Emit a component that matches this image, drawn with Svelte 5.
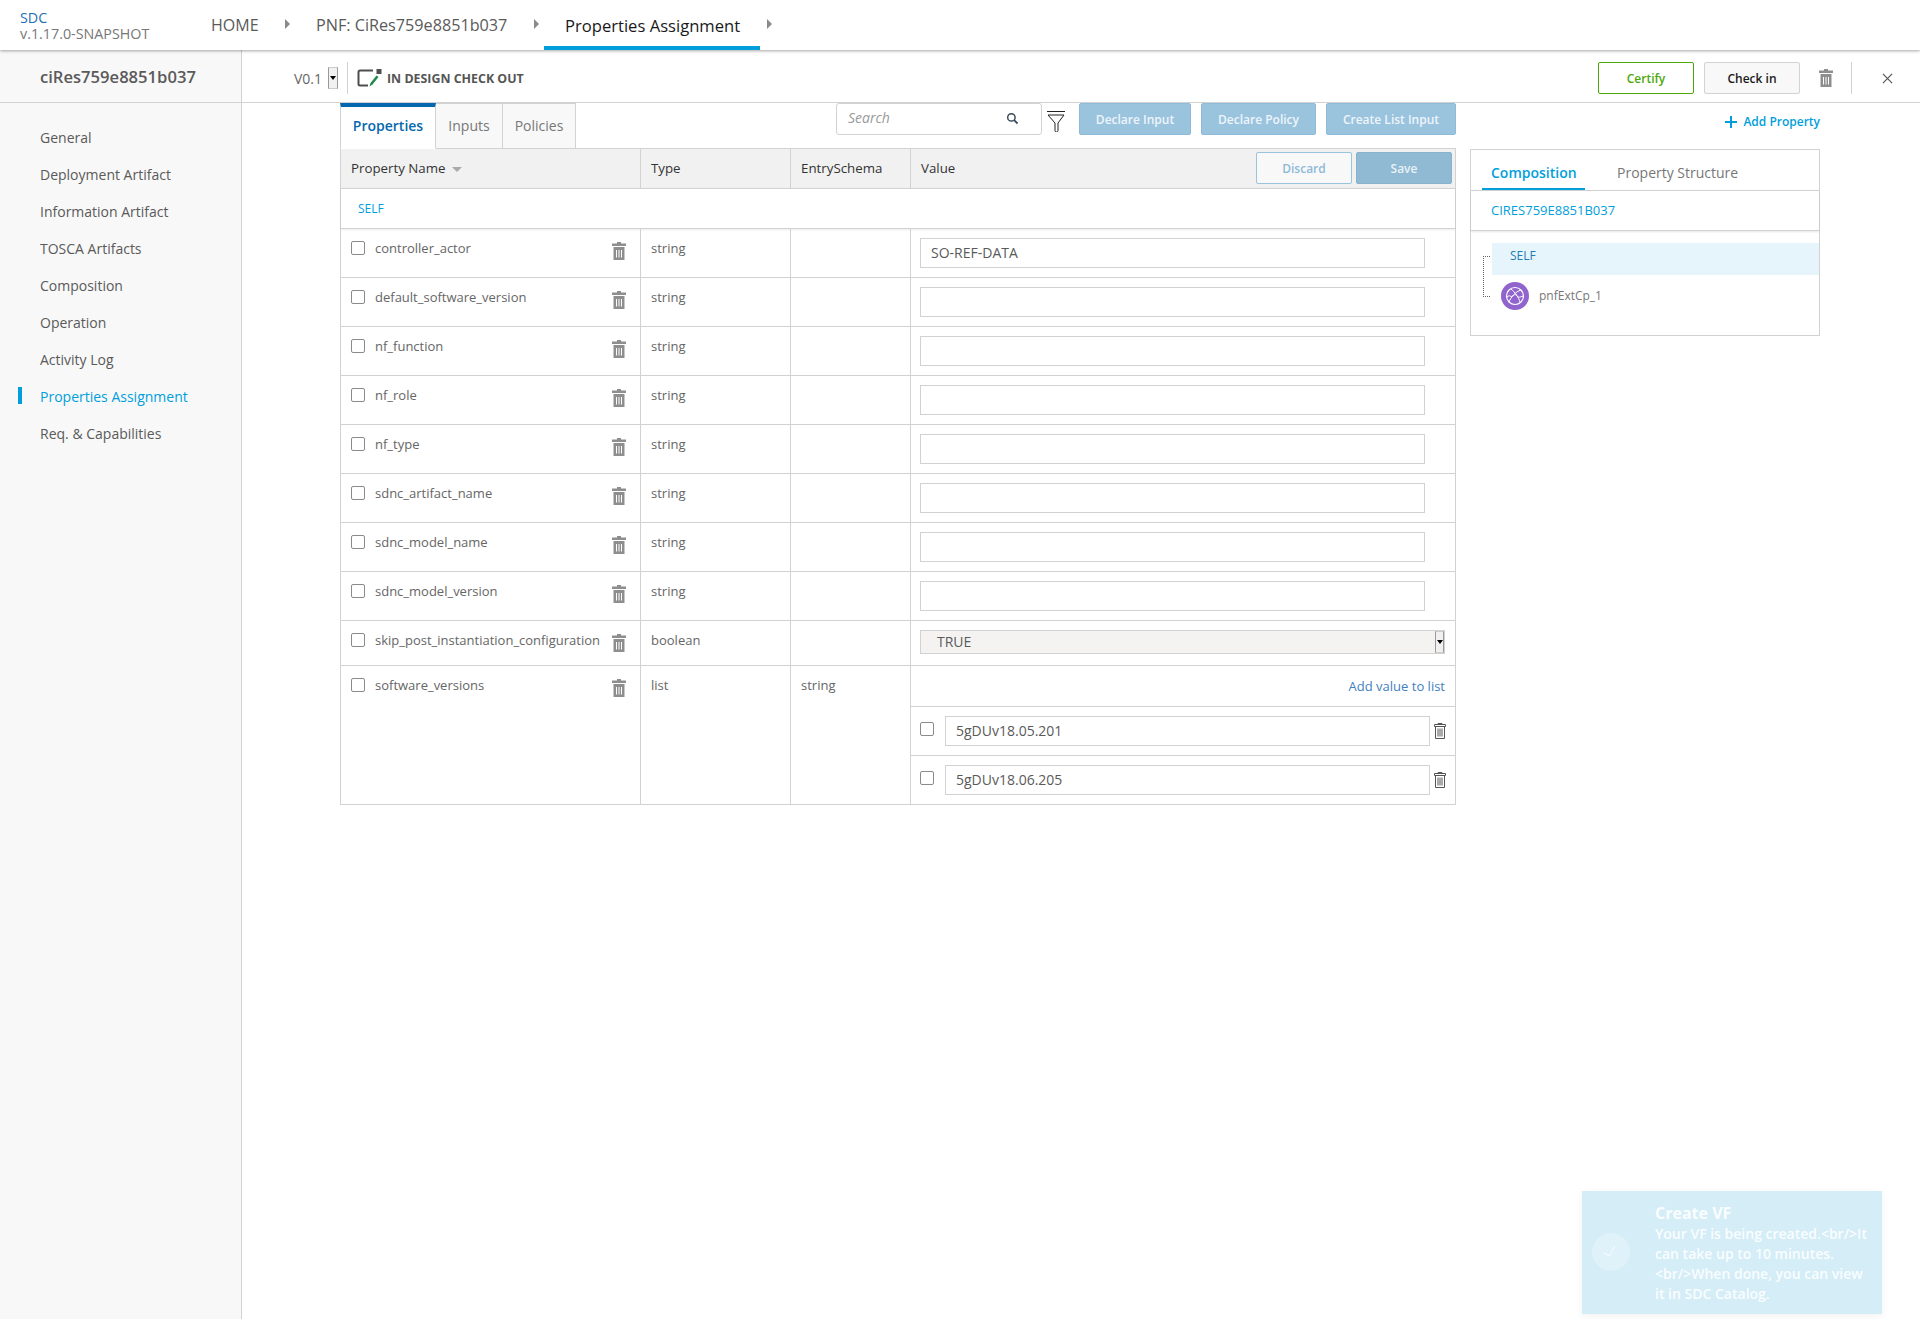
<script>
  const nav = ['General','Deployment Artifact','Information Artifact','TOSCA Artifacts','Composition','Operation','Activity Log','Properties Assignment','Req. & Capabilities'];
  const rows = [
    ['controller_actor','SO-REF-DATA'],['default_software_version',''],['nf_function',''],['nf_role',''],
    ['nf_type',''],['sdnc_artifact_name',''],['sdnc_model_name',''],['sdnc_model_version','']
  ];
</script>

{#snippet trash(cls)}
  <svg class={cls} viewBox="0 0 14 18" aria-hidden="true">
    <path d="M5 0h4v1.500h5V4H0V1.500h5z" fill="currentColor"/>
    <path d="M1.500 5h11v13h-11z" fill="currentColor"/>
    <path d="M4 8h1v7.500H4zM6.500 8h1v7.500h-1zM9 8h1v7.500H9z" fill="#fff"/>
  </svg>
{/snippet}

{#snippet trashLine()}
  <svg class="trash-line" viewBox="0 0 12 16" aria-hidden="true">
    <path d="M4 1.500V.5h4v1M.5 1.500h11v2H.5zM1.500 3.500h9v12h-9z" fill="none" stroke="#555" stroke-width="1"/>
    <path d="M4 5.500v8M6 5.500v8M8 5.500v8" stroke="#555" stroke-width="1"/>
  </svg>
{/snippet}

<div class="page">
  <header class="top">
    <div class="brand"><div class="sdc">SDC</div><div class="ver">v.1.17.0-SNAPSHOT</div></div>
    <nav class="crumbs">
      <span class="crumb home">HOME</span><i class="arrow a1"></i>
      <span class="crumb pnf">PNF: CiRes759e8851b037</span><i class="arrow a2"></i>
      <span class="crumb cur">Properties Assignment</span><i class="arrow a3"></i>
    </nav>
  </header>

  <div class="body">
    <aside class="side">
      <div class="name">ciRes759e8851b037</div>
      <ul class="menu">
        {#each nav as n}
          <li class:active={n === 'Properties Assignment'}>{n}</li>
        {/each}
      </ul>
    </aside>

    <main class="main">
      <div class="bar">
        <span class="version">V0.1</span>
        <span class="spin small"><b></b></span>
        <span class="vsep"></span>
        <svg class="state" viewBox="0 0 26 20" aria-hidden="true">
          <path d="M16 2.500H3A1.500 1.500 0 0 0 1.500 4v12A1.500 1.500 0 0 0 3 17.500h8" fill="none" stroke="#4f4f4f" stroke-width="2"/>
          <path d="M12.500 18.500l1-3.500 6-7.500 2 1.500-6 7.500z" fill="#1f8a4c"/>
          <rect x="19.500" y="1" width="5" height="5" fill="#4f4f4f"/>
        </svg>
        <span class="state-text">IN DESIGN CHECK OUT</span>
        <div class="bar-right">
          <button class="certify">Certify</button>
          <button class="checkin">Check in</button>
          {@render trash('trash big')}
          <span class="vsep2"></span>
          <svg class="close" viewBox="0 0 12 12" aria-hidden="true"><path d="M1 1l10 10M11 1L1 11" stroke="#555" stroke-width="1.300"/></svg>
        </div>
      </div>

      <div class="work">
        <section class="left">
          <div class="toolbar">
            <div class="tabs">
              <span class="tab on">Properties</span><span class="tab t2">Inputs</span><span class="tab t3">Policies</span>
            </div>
            <div class="search">
              <span>Search</span>
              <svg viewBox="0 0 14 14" aria-hidden="true"><circle cx="5.800" cy="5.800" r="4" fill="none" stroke="#3a4a5a" stroke-width="1.600"/><path d="M8.800 8.800l3.600 3.600" stroke="#3a4a5a" stroke-width="2"/></svg>
            </div>
            <svg class="funnel" viewBox="0 0 18 21" aria-hidden="true"><path d="M0 .5h18M1 4h16l-6 8v7.500a1.500 1.500 0 0 1-3 0V12z" fill="#fff" stroke="#222" stroke-width="1"/></svg>
            <button class="blue b1">Declare Input</button>
            <button class="blue b2">Declare Policy</button>
            <button class="blue b3">Create List Input</button>
          </div>

          <div class="table">
            <div class="row head">
              <div class="cell">Property Name <i class="sort"></i></div>
              <div class="cell">Type</div>
              <div class="cell">EntrySchema</div>
              <div class="cell val">Value
                <span class="acts"><button class="discard">Discard</button><button class="save">Save</button></span>
              </div>
            </div>
            <div class="selfrow">SELF</div>

            {#each rows as r}
              <div class="row prop">
                <div class="cell pn"><span class="cb"></span><span class="pname">{r[0]}</span>{@render trash('trash')}</div>
                <div class="cell">string</div>
                <div class="cell"></div>
                <div class="cell fieldcell"><input class="field" value={r[1]} aria-label={r[0]} /></div>
              </div>
            {/each}

            <div class="row prop skip">
              <div class="cell pn"><span class="cb"></span><span class="pname">skip_post_instantiation_configuration</span>{@render trash('trash')}</div>
              <div class="cell">boolean</div>
              <div class="cell"></div>
              <div class="cell fieldcell"><div class="select">TRUE<span class="spin"><b></b></span></div></div>
            </div>

            <div class="row prop list">
              <div class="cell pn"><span class="cb"></span><span class="pname">software_versions</span>{@render trash('trash')}</div>
              <div class="cell">list</div>
              <div class="cell">string</div>
              <div class="cell listcell">
                <div class="addv">Add value to list</div>
                <div class="sub"><span class="cb"></span><input class="field" value="5gDUv18.05.201" aria-label="value 1" />{@render trashLine()}</div>
                <div class="sub"><span class="cb"></span><input class="field" value="5gDUv18.06.205" aria-label="value 2" />{@render trashLine()}</div>
              </div>
            </div>
          </div>
        </section>

        <section class="right">
          <div class="addp"><span class="plus"></span>Add Property</div>
          <div class="panel">
            <div class="ptabs"><span class="ptab on">Composition</span><span class="ptab">Property Structure</span></div>
            <div class="pname2">CIRES759E8851B037</div>
            <div class="tree">
              <span class="dots"></span>
              <div class="tself">SELF</div>
              <div class="tnode">
                <svg viewBox="0 0 28 28" aria-hidden="true">
                  <circle cx="14" cy="14" r="14" fill="#9063cd"/>
                  <circle cx="14" cy="14" r="8.500" fill="none" stroke="#fff" stroke-width="1.200"/>
                  <path d="M6 15c3-3 4 1 6-1s2-2 4 0 3 1 6 0M10 7c4 3 8 9 9 13M8 20c2-5 6-10 12-12" fill="none" stroke="#fff" stroke-width="1"/>
                </svg>
                <span>pnfExtCp_1</span>
              </div>
            </div>
          </div>
        </section>
      </div>
    </main>
  </div>

  <div class="toast">
    <div class="tick"><svg viewBox="0 0 20 20" aria-hidden="true"><path d="M1 11l7 4 7-13" fill="none" stroke="#fff" stroke-width="1"/></svg></div>
    <div class="tbody">
      <div class="ttl">Create VF</div>
      <div class="msg">Your VF is being created.&lt;br/&gt;It can take up to 10 minutes.&lt;br/&gt;When done, you can view it in SDC Catalog.</div>
    </div>
  </div>
</div>

<style>
  :global(body) { margin: 0; background: #fff; }
  * { box-sizing: border-box; }
  .page { position: relative; height: 1319px; overflow: hidden; font-family: "Open Sans", sans-serif; font-size: 13px; color: #5a5a5a; }

  .top { height: 50px; display: flex; background: #fff; box-shadow: 0 1px 3px rgba(0,0,0,.35); position: relative; z-index: 2; }
  .brand { width: 211px; padding: 10px 0 0 20px; font-size: 14.300px; line-height: 16px; }
  .sdc { color: #1f6fb5; }
  .ver { color: #777; }
  .crumbs { display: flex; height: 50px; font-size: 16px; }
  .crumb { line-height: 51px; height: 50px; color: #5a5a5a; white-space: nowrap; }
  .home { width: 74px; }
  .pnf { width: 218px; margin-left: 26px; font-size: 16.200px; }
  .cur { color: #191919; padding: 0 21px; width: 216px; margin-left: 5px; border-bottom: 4px solid #009fdb; line-height: 52px; font-size: 16.600px; }
  .arrow { width: 0; height: 0; border-left: 5px solid #8a8a8a; border-top: 5px solid transparent; border-bottom: 5px solid transparent; margin-top: 19px; }
  .a3 { margin-left: 7px; }

  .body { display: flex; height: 1269px; }
  .side { width: 242px; flex: none; background: #f8f8f8; border-right: 1px solid #d2d2d2; }
  .name { height: 53px; line-height: 53px; padding-left: 40px; font-size: 16.600px; font-weight: 600; color: #5a5a5a; border-bottom: 1px solid #d2d2d2; }
  .menu { list-style: none; margin: 0; padding: 16px 0 0 40px; font-size: 14px; }
  .menu li { height: 37px; line-height: 37px; color: #5a5a5a; position: relative; }
  .menu li.active { color: #009fdb; }
  .menu li.active::before { content: ""; position: absolute; left: -22px; top: 9px; width: 4px; height: 17px; background: #009fdb; }

  .main { flex: 1; min-width: 0; }
  .bar { height: 53px; display: flex; align-items: center; border-bottom: 1px solid #d2d2d2; padding: 4px 0 0 52px; }
  .version { font-size: 14px; color: #666; width: 28px; }
  .spin { display: inline-block; width: 10px; height: 22px; background: #f1f1f1; border: 1px solid #ccc; border-left-color: #999; border-right-color: #999; position: relative; }
  .spin b { position: absolute; left: 1px; top: 8px; border-top: 4px solid #000; border-left: 3px solid transparent; border-right: 3px solid transparent; }
  .small { margin-left: 6px; }
  .vsep { width: 1px; height: 32px; background: #d2d2d2; margin: 0 9px; }
  .state { width: 26px; height: 20px; flex: none; }
  .state-text { font-size: 12.400px; font-weight: 700; color: #555; margin-left: 4px; }
  .bar-right { margin-left: auto; display: flex; align-items: center; padding-right: 27px; }
  .certify, .checkin { width: 96px; height: 32px; font: 600 12px "Open Sans", sans-serif; border-radius: 2px; padding: 0; }
  .certify { background: #fff; border: 1px solid #4ca90c; color: #4ca90c; }
  .checkin { background: #f8f8f8; border: 1px solid #d2d2d2; color: #191919; margin-left: 10px; }
  .trash { width: 14px; height: 18px; color: #8e8e8e; flex: none; }
  .big { margin-left: 19px; }
  .vsep2 { width: 1px; height: 32px; background: #d2d2d2; margin: 0 30px 0 18px; }
  .close { width: 11px; height: 11px; }

  .work { display: flex; padding-left: 98px; }
  .left { width: 1116px; flex: none; }
  .toolbar { display: flex; height: 45px; align-items: flex-start; }
  .tabs { display: flex; height: 46px; margin-right: 260px; position: relative; z-index: 1; }
  .tab { height: 46px; padding-top: 14px; line-height: 16px; font-size: 14px; color: #777; background: #f8f8f8; border-right: 1px solid #d2d2d2; border-top: 1px solid #d2d2d2; border-bottom: 1px solid #d2d2d2; text-align: center; }
  .tab.on { width: 96px; background: #fff; color: #0568ae; font-weight: 600; border-top: 4px solid #0568ae; padding-top: 11px; border-bottom-color: #fff; border-left: 1px solid #d2d2d2; }
  .t2 { width: 67px; }
  .t3 { width: 73px; }
  .search { width: 206px; height: 32px; border: 1px solid #d2d2d2; border-radius: 3px; display: flex; align-items: center; justify-content: space-between; padding: 0 22px 2px 11px; font-size: 14px; font-style: italic; color: #9a9a9a; }
  .search span { margin-top: -2px; }
  .search svg { width: 13px; height: 13px; }
  .funnel { width: 18px; height: 21px; margin: 8px 14px 0 5px; flex: none; }
  .blue { height: 32px; padding: 0; background: #9ac3de; border: 1px solid #90bbd8; border-radius: 2px; color: #eef5fa; font: 600 12px "Open Sans", sans-serif; }
  .b1 { width: 112px; }
  .b2 { width: 115px; margin-left: 10px; }
  .b3 { width: 130px; margin-left: 10px; }

  .table { border: 1px solid #d2d2d2; border-top: 0; width: 1116px; }
  .row { display: grid; grid-template-columns: 300px 150px 120px 1fr; border-top: 1px solid #d2d2d2; }
  .cell { border-right: 1px solid #d2d2d2; padding: 10px; min-width: 0; }
  .cell:last-child { border-right: 0; }
  .head { height: 40px; background: #f1f1f1; }
  .head .cell { color: #333; padding: 0 10px; line-height: 39px; display: block; position: relative; font-size: 13.300px; }
  .sort { display: inline-block; border-top: 5px solid #aaa; border-left: 5px solid transparent; border-right: 5px solid transparent; margin-left: 3px; vertical-align: 1px; }
  .acts { position: absolute; right: 3px; top: 3px; display: flex; gap: 4px; }
  .discard, .save { width: 96px; height: 32px; padding: 0; border-radius: 2px; font: 600 12px "Open Sans", sans-serif; }
  .discard { background: #f8f8f8; border: 1px solid #9ac3de; color: #8db8d6; }
  .save { background: #90b9d4; border: 1px solid #88b2ce; color: #e8f1f7; }
  .selfrow { height: 41px; line-height: 40px; padding-left: 17px; border-top: 1px solid #d2d2d2; border-bottom: 1px solid #d2d2d2; box-shadow: 0 1px 2px rgba(0,0,0,.08); color: #009fdb; font-size: 12px; }

  .prop { height: 49px; color: #666; line-height: 18px; }
  .selfrow + .prop { border-top: 0; height: 48px; }
  .skip { height: 45px; }
  .list { height: 139px; }
  .pn { display: flex; align-items: flex-start; padding: 10px 14px 0 10px; }
  .pn .trash { margin-left: auto; margin-top: 3px; }
  .cb { width: 14px; height: 14px; border: 1px solid #8a8a8a; border-radius: 2px; background: #fff; flex: none; margin-top: 2px; }
  .pname { margin-left: 10px; white-space: nowrap; }
  .fieldcell { padding: 9px 30px 0 9px; }
  .field { display: block; width: 100%; height: 30px; border: 1px solid #d2d2d2; border-radius: 0; padding: 0 10px 2px; font: 14px "Open Sans", sans-serif; color: #5a5a5a; outline: 0; background: #fff; }
  .skip .fieldcell { padding: 9px 10px 0 9px; }
  .select { height: 24px; background: #f4f3f2; border: 1px solid #d2d2d2; padding-left: 16px; font-size: 14px; line-height: 22px; color: #5a5a5a; position: relative; }
  .select .spin { position: absolute; right: 0; top: 0; height: 22px; width: 9px; }
  .select .spin b { top: 8px; }
  .listcell { padding: 0; }
  .addv { height: 40px; line-height: 40px; text-align: right; padding-right: 10px; color: #3f7fbf; }
  .sub { height: 49px; border-top: 1px solid #d2d2d2; display: flex; align-items: flex-start; padding: 9px 9px 0 9px; }
  .sub .cb { margin-top: 6px; }
  .sub .field { flex: 1; width: auto; margin-left: 11px; padding-left: 10px; }
  .trash-line { width: 12px; height: 16px; margin: 7px 0 0 4px; flex: none; }

  .right { width: 350px; margin-left: 14px; }
  .addp { height: 46px; padding-bottom: 9px; display: flex; align-items: center; justify-content: flex-end; color: #009fdb; font-weight: 600; font-size: 12px; }
  .plus { width: 12px; height: 12px; margin-right: 6px; background: linear-gradient(#009fdb,#009fdb) center/100% 2px no-repeat, linear-gradient(#009fdb,#009fdb) center/2px 100% no-repeat; }
  .panel { height: 187px; border: 1px solid #d2d2d2; }
  .ptabs { height: 41px; display: flex; border-bottom: 1px solid #d2d2d2; font-size: 14px; color: #777; }
  .ptab { height: 40px; line-height: 46px; padding: 0 9px; margin-left: 11px; }
  .ptab.on { color: #009fdb; font-weight: 600; border-bottom: 2px solid #009fdb; width: 103px; padding: 0 9px; white-space: nowrap; }
  .ptab + .ptab { margin-left: 23px; }
  .pname2 { height: 40px; line-height: 38px; padding-left: 20px; color: #009fdb; font-size: 13px; border-bottom: 1px solid #d2d2d2; box-shadow: 0 1px 2px rgba(0,0,0,.1); }
  .tree { position: relative; padding: 12px 0 0 21px; }
  .dots { position: absolute; left: 12px; top: 25px; width: 7px; height: 41px; border: 1px dotted #666; border-right: 0; }
  .tself { height: 32px; line-height: 25px; padding-left: 18px; background: #e6f5fb; color: #1f7bb5; font-size: 12px; }
  .tnode { display: flex; align-items: center; padding: 7px 0 0 9px; font-size: 12px; color: #777; }
  .tnode span { margin-top: -2px; }
  .tnode svg { width: 28px; height: 28px; margin-right: 10px; }

  .toast { position: absolute; left: 1582px; top: 1191px; width: 300px; height: 123px; background: #d4edf7; box-shadow: 0 2px 8px rgba(0,0,0,.06); color: #fafdff; display: flex; }
  .tick { position: absolute; left: 10px; top: 42px; width: 38px; height: 38px; border-radius: 50%; background: #dff2fa; display: flex; align-items: center; justify-content: center; }
  .tick svg { width: 16px; height: 16px; }
  .tbody { padding: 11px 10px 0 73px; }
  .ttl { font-size: 16px; font-weight: 700; line-height: 22px; }
  .msg { font-size: 14px; font-weight: 600; line-height: 20px; }
</style>
